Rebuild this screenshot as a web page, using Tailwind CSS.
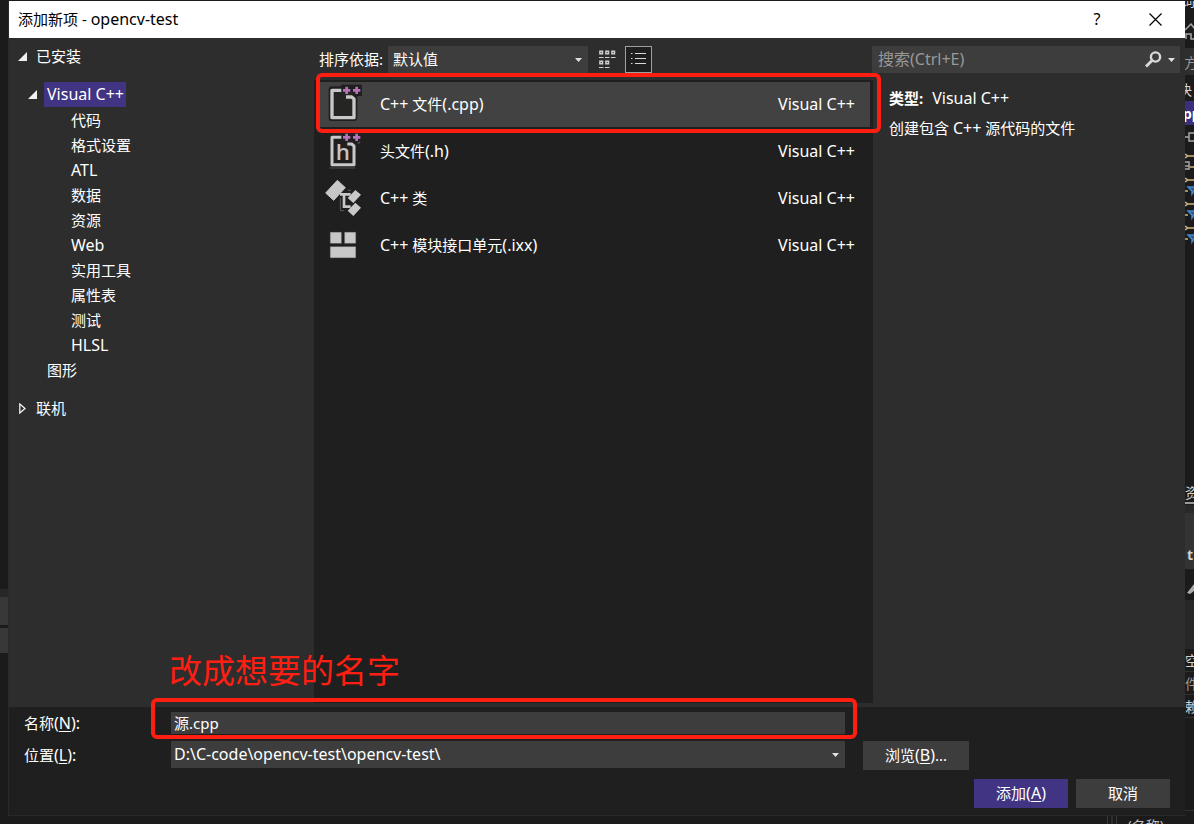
<!DOCTYPE html>
<html lang="zh-CN">
<head>
<meta charset="utf-8">
<title>添加新项 - opencv-test</title>
<script src="https://cdn.jsdelivr.net/npm/@tailwindcss/browser@4"></script>
</head>
<body class="flex h-screen flex-col overflow-hidden bg-[#1b1b1b] pt-px font-['Noto_Sans','Noto_Sans_CJK_SC',sans-serif] text-[15px] leading-[25px] text-white">
<div class="flex min-h-0 flex-1">

  <!-- Editor window edge, left of the dialog -->
  <div class="flex w-[9px] flex-none flex-col justify-end border-r border-[#2a2a2a] pb-[163px]" aria-hidden="true">
    <div class="h-2 bg-[#272727]"></div>
    <div class="h-7 bg-[#383838]"></div>
    <div class="h-[3px]"></div>
    <div class="h-[25px] bg-[#383838]"></div>
  </div>

  <div role="dialog" aria-labelledby="title" class="flex min-w-0 flex-1 flex-col bg-[#2d2d2d]">
    <header class="flex h-[37px] flex-none items-center bg-white pl-[9px] pr-5 text-black">
      <h1 id="title" class="flex-1">添加新项 - <span class="text-[16px]">opencv-test</span></h1>
      <button class="mr-9 w-6 text-center text-[16px]" aria-label="帮助">?</button>
      <button class="flex size-5 items-center justify-center" aria-label="关闭">
        <svg class="size-[13px]" viewBox="0 0 13 13" fill="none" stroke="#000" stroke-width="1.2"><path d="M.5.5l12 12M12.500.5l-12 12"/></svg>
      </button>
    </header>

    <main class="flex min-h-0 flex-1">
      <nav class="w-[305px] flex-none pl-[9px] pt-[6px]">
        <button class="flex items-center gap-[9px]">
          <svg class="size-[9px]" viewBox="0 0 9 9"><path d="M9 0v9H0z" fill="#f1f1f1"/></svg>已安装
        </button>
        <ul class="mt-[13px] pl-[10px]">
          <li>
            <button class="flex items-center gap-[7px]">
              <svg class="size-[9px]" viewBox="0 0 9 9"><path d="M9 0v9H0z" fill="#f1f1f1"/></svg><span class="bg-[#413482] pl-[3px] pr-0.5 text-[16px]">Visual C++</span>
            </button>
            <ul class="pl-[43px] pt-px">
              <li class="h-[25px]"><button>代码</button></li>
              <li class="h-[25px]"><button>格式设置</button></li>
              <li class="h-[25px]"><button class="text-[16px]">ATL</button></li>
              <li class="h-[25px]"><button>数据</button></li>
              <li class="h-[25px]"><button>资源</button></li>
              <li class="h-[25px]"><button class="text-[16px]">Web</button></li>
              <li class="h-[25px]"><button>实用工具</button></li>
              <li class="h-[25px]"><button>属性表</button></li>
              <li class="h-[25px]"><button>测试</button></li>
              <li class="h-[25px]"><button class="text-[16px]">HLSL</button></li>
            </ul>
          </li>
          <li class="pl-[19px]"><button>图形</button></li>
        </ul>
        <button class="mt-[13px] flex items-center gap-[10px] pl-px">
          <svg class="h-[11px] w-[7px]" viewBox="0 0 7 11"><path d="M.8 1v9L6 5.500z" fill="none" stroke="#f1f1f1" stroke-width="1.300"/></svg>联机
        </button>
      </nav>

      <section class="flex min-w-0 flex-1 flex-col pb-1">
        <div class="flex h-[42px] flex-none pl-[5px] pt-2">
          <label for="sort" class="w-[69px] leading-[27px]">排序依据:</label>
          <div class="relative h-[27px] w-[200px]">
            <select id="sort" class="size-full appearance-none bg-[#3d3d3d] px-[5px] leading-[27px]"><option>默认值</option></select>
            <svg class="pointer-events-none absolute right-[6px] top-3 h-1 w-[7px]" viewBox="0 0 7 4"><path d="M0 0h7L3.500 4z" fill="#e0e0e0"/></svg>
          </div>
          <button class="ml-[6px] flex size-[27px] items-center justify-center" aria-label="小图标">
            <svg class="h-[19px] w-[17px]" viewBox="0 0 17 19" fill="none" stroke="#d0d0d0">
              <path stroke-width="1.500" d="M.9 1.200h2.600v2.600H.9zM6.900 1.200h2.600v2.600H6.900zM12.900 1.200h2.600v2.600h-2.600zM.9 11.200h2.600v2.600H.9zM6.900 11.200h2.600v2.600H6.900z"/>
              <path d="M0 7.500h4.500m1.500 0h4.500m1.500 0h4.500M0 17.500h4.500m1.500 0h4.500"/>
            </svg>
          </button>
          <button class="ml-1 flex h-[27px] w-[27px] items-start justify-center border border-[#a0a0a0] bg-[#1f1f1f] pt-[5px]" aria-label="列表">
            <svg class="h-[13px] w-[15px]" viewBox="0 0 15 13" stroke="#d8d8d8"><path d="M0 1.500h1.500M4 1.500h11M0 6.500h1.500M4 6.500h11M0 11.500h1.500M4 11.500h11"/></svg>
          </button>
        </div>

        <div class="relative min-h-0 flex-1 bg-[#1f1f1f] pt-px">
          <ul role="listbox" aria-label="模板">
            <li role="option" aria-selected="true" class="mr-[3px] flex h-[47px] items-center border-y border-l-2 border-[#1f1f1f] bg-[#424242] pl-1 pr-[15px]">
              <svg class="h-[45px] w-[50px] flex-none" viewBox="0 3 150 135">
                <path d="M36 16h60l16 14v76q0 14-10 14H36q-10 0-10-10V26q0-10 10-10z" fill="#1f1f1f"/>
                <path d="M64 11h62v34H64z" fill="#1f1f1f"/>
                <path d="M40 32h58v74H40z" fill="#252523"/>
                <path d="M64 28H36v82h66V54L95 48H78" fill="none" stroke="#c8c8c8" stroke-width="10" stroke-linejoin="round"/>
                <path d="M80 17v22M69 28h22M110 17v22M99 28h22" stroke="#b870b8" stroke-width="8"/>
              </svg>
              <span class="ml-[10px] flex-1"><span class="text-[16px]">C++</span> 文件<span class="text-[16px]">(.cpp)</span></span><span class="text-[16px]">Visual C++</span>
            </li>
            <li role="option" class="flex h-[47px] items-center pl-[6px] pr-[18px]">
              <svg class="h-[47px] w-[50px] flex-none" viewBox="0 0 150 141">
                <path d="M28 120h78" stroke="#666" stroke-width="2"/>
                <path d="M64 28H36v82h66V54L95 48H82" fill="none" stroke="#c8c8c8" stroke-width="9" stroke-linejoin="round"/>
                <text x="47" y="95" font-family="Open Sans" font-weight="600" font-size="67" fill="#c4c4c4">h</text>
                <path d="M80 17v22M69 28h22M110 17v22M99 28h22" stroke="#b870b8" stroke-width="8"/>
                <path d="M112 45h7v-4" fill="none" stroke="#777" stroke-width="2"/>
              </svg>
              <span class="ml-[10px] flex-1">头文件<span class="text-[16px]">(.h)</span></span><span class="text-[16px]">Visual C++</span>
            </li>
            <li role="option" class="flex h-[47px] items-center pl-[6px] pr-[18px]">
              <svg class="h-[47px] w-[50px] flex-none" viewBox="0 0 150 141">
                <path d="M52 16L76 38 41 76 17 54z" fill="#c8c8c8" stroke="#c8c8c8" stroke-width="3" stroke-linejoin="round"/>
                <path d="M60 58h32M72 58v37h20" fill="none" stroke="#c8c8c8" stroke-width="8"/>
                <path d="M61 68v39h11M83 46h10" fill="none" stroke="#777" stroke-width="2"/>
                <path d="M106 45l17 14-23 25-17-15zM106 83l17 15-23 25-17-16z" fill="#c8c8c8"/>
              </svg>
              <span class="ml-[10px] flex-1"><span class="text-[16px]">C++</span> 类</span><span class="text-[16px]">Visual C++</span>
            </li>
            <li role="option" class="flex h-[47px] items-center pl-[6px] pr-[18px]">
              <svg class="h-[47px] w-[50px] flex-none" viewBox="0 0 150 141">
                <path d="M31 31h33v33H31zM74 31h33v33H74zM31 74h76v33H31z" fill="#c8c8c8" stroke="#999" stroke-width="1"/>
              </svg>
              <span class="ml-[10px] flex-1"><span class="text-[16px]">C++</span> 模块接口单元<span class="text-[16px]">(.ixx)</span></span><span class="text-[16px]">Visual C++</span>
            </li>
          </ul>
          <!-- Highlight drawn over the selected template -->
          <div class="pointer-events-none absolute -right-2 -top-[7px] left-[2px] h-[60px] rounded-md border-4 border-[#ff1f12]"></div>
        </div>
      </section>

      <aside class="w-[312px] flex-none pt-2">
        <div class="mr-[5px] -ml-px flex h-[27px] items-center bg-[#3d3d3d] pl-[6px] pr-[5px]">
          <input type="search" aria-label="搜索" placeholder="搜索(Ctrl+E)" class="min-w-0 flex-1 bg-transparent text-[16px] outline-none placeholder:text-[#999999]">
          <button aria-label="开始搜索"><svg class="size-[17px]" viewBox="0 0 17 17" fill="none" stroke="#d8d8d8"><circle cx="10.500" cy="6" r="4.600" stroke-width="2.400"/><path d="M7 9.500L1 15.500" stroke-width="3"/></svg></button>
          <button class="ml-[6px]" aria-label="搜索选项"><svg class="h-1 w-[7px]" viewBox="0 0 7 4"><path d="M0 0h7L3.500 4z" fill="#e0e0e0"/></svg></button>
        </div>
        <div class="pl-4 pt-[13px]">
          <p><b class="mr-[9px]">类型:</b><span class="text-[16px]">Visual C++</span></p>
          <p class="mt-[5px]">创建包含 <span class="text-[16px]">C++</span> 源代码的文件</p>
        </div>
      </aside>
    </main>

    <footer class="relative h-[109px] flex-none border-b border-[#292929] bg-[#1f1f1f] pl-[15px] pr-[15px] pt-[5px]">
      <div class="flex items-center pr-[325px]">
        <label for="name" class="w-[147px] flex-none leading-[22px]">名称<span class="text-[16px]">(<u class="underline-offset-2">N</u>):</span></label>
        <input id="name" value="源.cpp" class="h-[22px] min-w-0 flex-1 bg-[#3d3d3d] px-[3px] outline-none">
      </div>
      <div class="mt-[7px] flex items-start">
        <label for="location" class="w-[147px] flex-none leading-[29px]">位置<span class="text-[16px]">(<u class="underline-offset-2">L</u>):</span></label>
        <div class="relative h-[27px] min-w-0 flex-1">
          <select id="location" class="size-full appearance-none bg-[#3d3d3d] px-[3px] text-[16px] leading-[27px]"><option>D:\C-code\opencv-test\opencv-test\</option></select>
          <svg class="pointer-events-none absolute right-[6px] top-3 h-1 w-[7px]" viewBox="0 0 7 4"><path d="M0 0h7L3.500 4z" fill="#e0e0e0"/></svg>
        </div>
        <button class="ml-[18px] mr-[201px] h-[29px] w-[106px] bg-[#3d3d3d]">浏览<span class="text-[16px]">(<u class="underline-offset-2">B</u>)</span>...</button>
      </div>
      <div class="mt-[9px] flex justify-end gap-2">
        <button class="h-[29px] w-[94px] bg-[#413482]">添加<span class="text-[16px]">(<u class="underline-offset-2">A</u>)</span></button>
        <button class="h-[29px] w-[94px] bg-[#3d3d3d]">取消</button>
      </div>
      <!-- Annotation drawn over the name field -->
      <div class="pointer-events-none absolute -top-[9px] left-[142px] right-[328px] h-[41px] rounded-md border-4 border-[#ff1f12]"></div>
      <p class="pointer-events-none absolute -top-[60px] left-[160px] text-[33px] leading-[48px] text-[#ff1f12]">改成想要的名字</p>
    </footer>
  </div>

  <!-- Editor window edge, right of the dialog -->
  <svg class="h-[823px] w-[9px] flex-none" viewBox="0 1 9 823" font-family="Noto Sans, Noto Sans CJK SC, sans-serif" font-size="14" fill="#d0d0d0" aria-hidden="true">
    <path d="M0 48h9v27H0z" fill="#2e2e2e"/>
    <text x="-4" y="6">词</text>
    <path d="M0 30l6-6 4 5M1 39v-5h5v5h4" fill="none" stroke="#a8a8a8" stroke-width="1.500"/>
    <text x="-1" y="68" fill="#999">方</text>
    <text x="-7" y="95">决</text>
    <path d="M0 101h9v24H0z" fill="#3b2f7d"/>
    <text x="-2" y="119" font-weight="700" fill="#fff">pp</text>
    <path d="M0 137h4M4 133h8v8H4z" fill="none" stroke="#a8a8a8" stroke-width="1.500"/>
    <path d="M-2 162h6v7h-6M0 166h4" fill="none" stroke="#a8a8a8" stroke-width="1.500"/>
    <path d="M0 154l3 2-3 2M3 156h6M0 178l3 2-3 2M3 180h6M0 202l3 2-3 2M3 204h6M0 226l3 2-3 2M3 228h6M0 191h3M0 215h3M0 239h3M5 167h4" fill="none" stroke="#cdb27c" stroke-width="1.500"/>
    <path d="M3 187h9l-5 7v-3zM3 211h9l-5 7v-3zM3 235h9l-5 7v-3z" fill="#2c5a88" stroke="#4389cc" stroke-width="1.500"/>
    <text x="0" y="498">资</text>
    <path d="M0 502h9v2H0z" fill="#999"/>
    <path d="M0 505h9v8H0z" fill="#292929"/>
    <path d="M0 513h9v56H0z" fill="#333"/>
    <text x="2" y="560" font-weight="700">t</text>
    <path d="M2 593l7-9v7l-4 3z" fill="#aaa"/>
    <path d="M0 600h9v49H0z" fill="#272727"/>
    <text x="0" y="666">空</text><text x="0" y="689" fill="#999">件</text><text x="0" y="712">赖</text>
    <path d="M0 671.500h9M0 694.500h9M0 717.500h9M0 810.500h9" stroke="#303030"/>
  </svg>
</div>

<!-- Editor window edge, below the dialog -->
<div class="flex h-2 flex-none items-start justify-end gap-[3px] overflow-hidden pr-[30px] text-sm leading-5 text-[#c0c0c0]" aria-hidden="true">
  <span class="h-full w-px bg-[#3a3a3a]"></span><span class="h-full w-[2px] bg-[#303030]"></span><span class="h-full w-px bg-[#3a3a3a]"></span>
  <span class="ml-2">(名称)</span>
</div>
</body>
</html>
